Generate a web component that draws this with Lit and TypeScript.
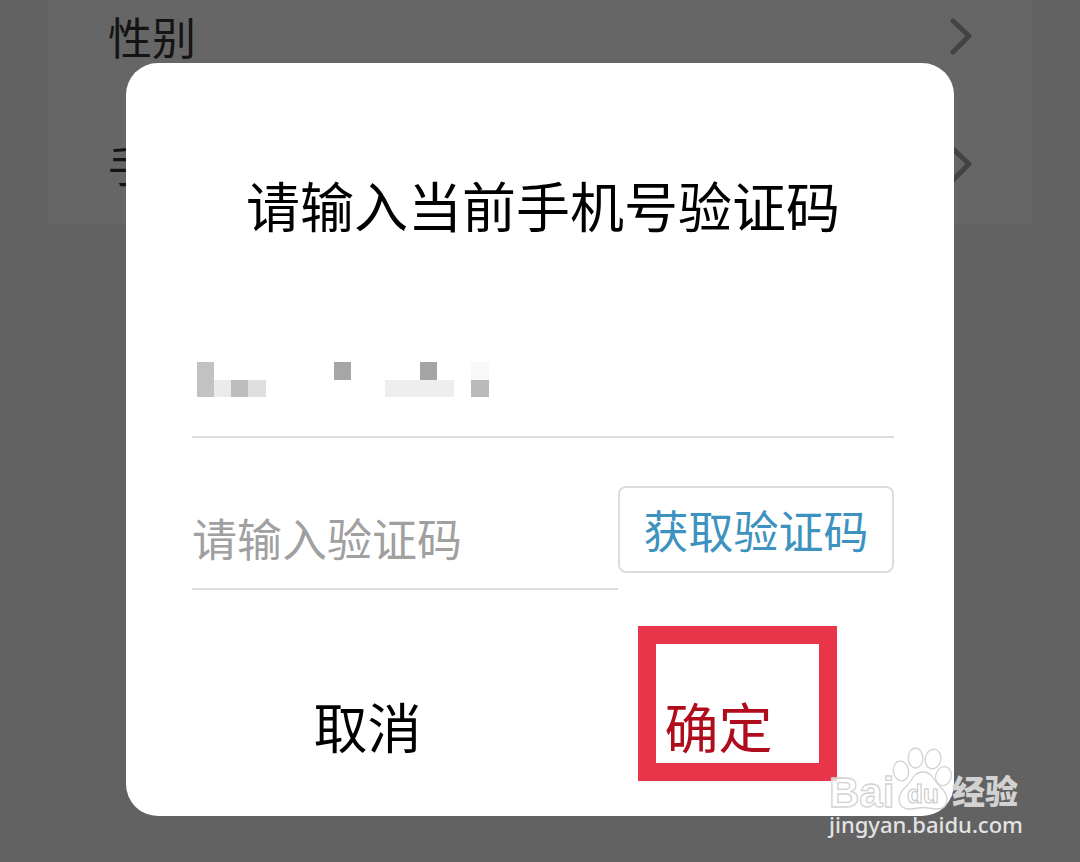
import { LitElement, html, css, svg } from "lit";
import { customElement, property } from "lit/decorators.js";

@customElement("profile-list")
class ProfileList extends LitElement {
  static styles = css`
    :host {
      display: block;
      margin: 0 48px;
      background: #666;
    }
    .rows {
      display: flex;
      flex-direction: column;
      gap: 52px;
      margin: 0;
      padding: 0 60px 20px;
      list-style: none;
    }
    .row {
      display: flex;
      align-items: flex-start;
      justify-content: space-between;
      height: 76px;
      font-size: 44px;
      line-height: 72px;
      color: #141414;
    }
    .chevron {
      width: 24px;
      height: 40px;
      display: block;
      margin-top: 18px;
    }
  `;

  render() {
    return html`
      <ul class="rows">
        ${["性别", "手机号"].map(
          (label) => html`
            <li class="row">
              <span>${label}</span>
              <svg class="chevron" viewBox="0 0 24 40" aria-hidden="true">
                <path
                  d="M5 3 L21 18 L5 34"
                  fill="none"
                  stroke="#434343"
                  stroke-width="5"
                  stroke-linecap="round"
                  stroke-linejoin="round"
                />
              </svg>
            </li>
          `
        )}
      </ul>
    `;
  }
}

@customElement("verify-dialog")
class VerifyDialog extends LitElement {
  @property() heading = "请输入当前手机号验证码";

  static styles = css`
    :host {
      display: block;
      background: #fff;
      border-radius: 32px;
      padding: 103px 60px 51px 66px;
    }
    .heading {
      margin: 0;
      font-size: 54px;
      line-height: 78px;
      font-weight: 400;
      text-align: center;
      color: #000;
    }
    .phone {
      display: flex;
      align-items: center;
      height: 108px;
      margin-top: 84px;
      border-bottom: 2px solid #dcdcdc;
    }
    .mask {
      display: block;
      width: 300px;
      height: 36px;
      margin: 0 0 4px 5px;
    }
    .code {
      display: flex;
      align-items: flex-start;
      margin-top: 48px;
    }
    .code-input {
      flex: 1;
      min-width: 0;
      height: 104px;
      box-sizing: border-box;
      padding: 0;
      border: 0;
      border-bottom: 2px solid #dcdcdc;
      border-radius: 0;
      background: none;
      outline: none;
      font: inherit;
      font-size: 45px;
      color: #000;
    }
    .code-input::placeholder {
      color: #a0a0a0;
      opacity: 1;
    }
    .send {
      width: 276px;
      height: 87px;
      padding: 0;
      border: 2px solid #dcdcdc;
      border-radius: 8px;
      background: #fff;
      font: inherit;
      font-size: 45px;
      color: #3d92c0;
    }
    .actions {
      display: grid;
      grid-template-columns: 1fr 1fr;
      margin-top: 95px;
    }
    .action {
      position: relative;
      height: 80px;
      padding: 0;
      border: 0;
      background: none;
      font: inherit;
      font-size: 54px;
      color: #000;
    }
    .confirm {
      color: #b00d1c;
    }
    .marker {
      position: absolute;
      left: calc(50% - 81px);
      top: -59px;
      width: 199px;
      height: 155px;
      box-sizing: border-box;
      border: 18px solid #e93549;
      pointer-events: none;
    }
  `;

  private blocks: [number, number, number, number, string][] = [
    [0, 0, 17, 35, "#c2c2c2"],
    [17, 18, 17, 17, "#ebebeb"],
    [34, 18, 17, 17, "#bdbdbd"],
    [51, 18, 18, 17, "#dfdfdf"],
    [137, 0, 17, 18, "#a6a6a6"],
    [188, 18, 69, 17, "#eeeeee"],
    [223, 0, 17, 18, "#a4a4a4"],
    [274, 0, 18, 18, "#f8f8f8"],
    [274, 18, 18, 17, "#bababa"],
  ];

  render() {
    return html`
      <h1 class="heading">${this.heading}</h1>
      <div class="phone">
        <svg class="mask" viewBox="0 0 300 36" aria-hidden="true">
          ${this.blocks.map(
            ([x, y, w, h, fill]) =>
              svg`<rect x=${x} y=${y} width=${w} height=${h} fill=${fill}></rect>`
          )}
        </svg>
      </div>
      <div class="code">
        <input
          class="code-input"
          type="text"
          inputmode="numeric"
          aria-label="请输入验证码"
          placeholder="请输入验证码"
        />
        <button class="send" type="button">获取验证码</button>
      </div>
      <div class="actions">
        <button class="action" type="button">取消</button>
        <button class="action confirm" type="button">
          确定<span class="marker"></span>
        </button>
      </div>
    `;
  }
}

@customElement("site-watermark")
class SiteWatermark extends LitElement {
  static styles = css`
    :host {
      display: flex;
      flex-direction: column;
      width: 192px;
    }
    .logo {
      display: block;
      width: 192px;
      height: 66px;
    }
    .latin {
      font-family: "Liberation Sans", sans-serif;
      font-weight: 700;
    }
    .cjk {
      font-family: "Noto Sans CJK SC", sans-serif;
      font-weight: 900;
    }
    .url {
      font-family: "Noto Sans", sans-serif;
      font-size: 22px;
      line-height: 26px;
      font-weight: 500;
      color: #e2e2e2;
      text-decoration: none;
      white-space: nowrap;
    }
  `;

  render() {
    return html`
      <svg class="logo" viewBox="0 0 192 66" overflow="visible">
        <g fill="#fff" fill-opacity="0.75" stroke="#d2d2d2" stroke-width="1.3">
          <text class="latin" x="0" y="62" font-size="42">Bai</text>
          <ellipse cx="72" cy="26" rx="7.500" ry="10" transform="rotate(-8 72 26)" />
          <ellipse cx="86.500" cy="13" rx="7.300" ry="10" />
          <ellipse cx="104" cy="14" rx="7.800" ry="9.800" transform="rotate(12 104 14)" />
          <ellipse cx="114.500" cy="31" rx="7.800" ry="9.500" transform="rotate(15 114 31)" />
          <path
            d="M94 27 C87 27 84 32 81 37 C77 43 70 46 70 54 C70 61 75 64 81 64 C86 64 89 62.500 94 62.500 C99 62.500 103 64 108 64 C114 64 118 61 118 54 C118 46 111 43 107 37 C104 32 101 27 94 27 Z"
          />
          <text class="latin" x="78" y="58" font-size="26" stroke="#c8c8c8" stroke-width="1">du</text>
        </g>
        <text class="cjk" x="123" y="59" font-size="33" fill="#d2d2d2">经验</text>
      </svg>
      <a class="url" href="#">jingyan.baidu.com</a>
    `;
  }
}

@customElement("app-root")
class AppRoot extends LitElement {
  static styles = css`
    :host {
      display: block;
      position: relative;
      min-height: 100vh;
      overflow: hidden;
      background: #626262;
      font-family: "Noto Sans CJK SC", sans-serif;
    }
    .overlay {
      position: absolute;
      inset: 0;
      padding: 63px 126px 0;
    }
    .watermark {
      position: absolute;
      right: 59px;
      bottom: 25px;
    }
  `;

  render() {
    return html`
      <profile-list></profile-list>
      <div class="overlay">
        <verify-dialog role="dialog" aria-modal="true"></verify-dialog>
      </div>
      <site-watermark class="watermark"></site-watermark>
    `;
  }
}
